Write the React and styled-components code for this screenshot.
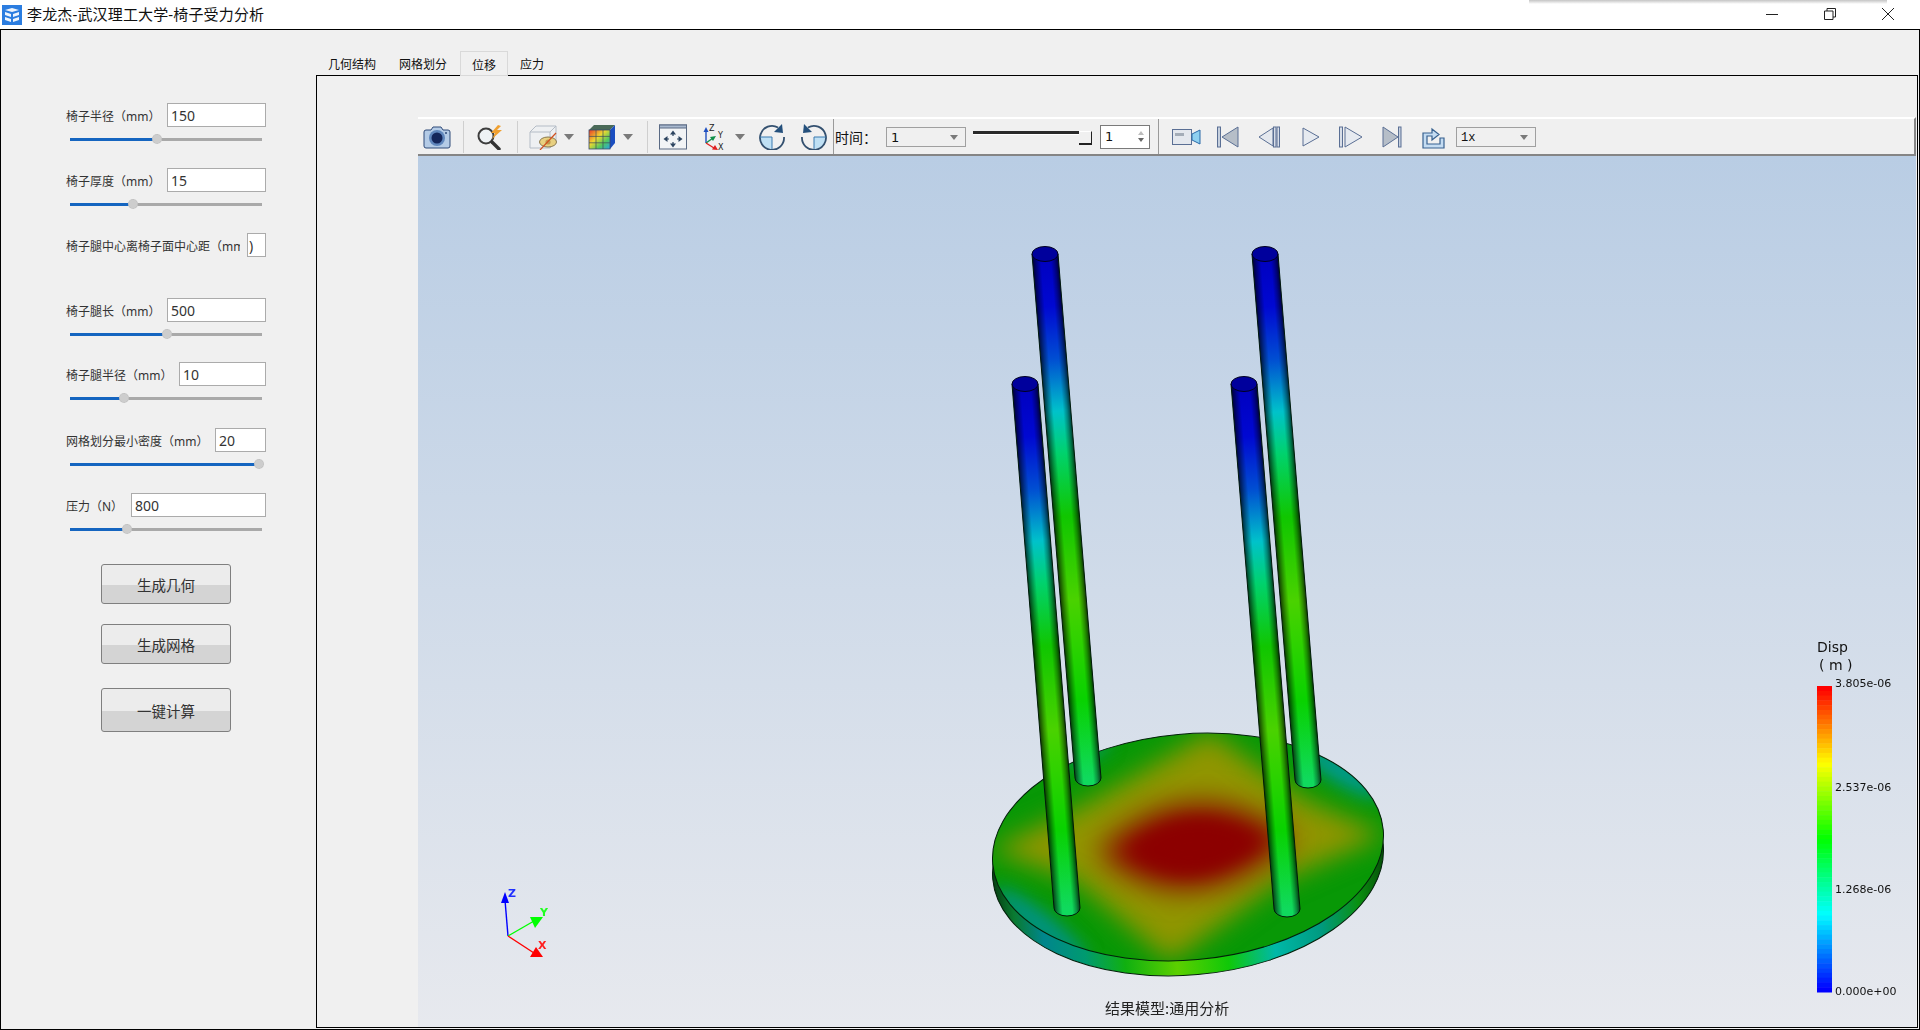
import React from "react";
import styled, { createGlobalStyle } from "styled-components";

const GlobalStyle = createGlobalStyle`
  html, body {
    margin: 0;
    padding: 0;
    background: #fff;
    font-family: "Noto Sans", "Noto Sans CJK SC", sans-serif;
  }
  * {
    box-sizing: border-box;
  }
`;

const Page = styled.div`
  width: 1920px;
  height: 1030px;
  display: flex;
  flex-direction: column;
  overflow: hidden;
`;

const TitleBar = styled.div`
  position: relative;
  height: 29px;
  flex: none;
  display: flex;
  align-items: center;
  padding-left: 2px;
  background: #fff;
`;

const TitleText = styled.span`
  margin: -3px 0 0 5px;
  font-size: 15px;
  letter-spacing: 0.15px;
  color: #111;
`;

const WindowControls = styled.div`
  margin-left: auto;
  padding: 0 26px 2px 0;
  display: flex;
  align-items: center;
  gap: 46px;
  height: 100%;
  svg {
    display: block;
  }
`;

const ForeignShadow = styled.div`
  position: absolute;
  left: 1529px;
  top: 0;
  width: 358px;
  height: 4px;
  background: linear-gradient(#c4c4c4, #ffffff);
`;

const Window = styled.div`
  flex: 1;
  display: flex;
  min-height: 0;
  border: 1px solid #000;
  background: #f0f0f0;
`;

const SidePanel = styled.div`
  width: 315px;
  flex: none;
  padding: 73px 0 0 65px;
  display: flex;
  flex-direction: column;
`;

const FieldGroup = styled.div`
  width: 200px;
  margin-top: ${(p) => p.$mt || 0}px;
`;

const FieldRow = styled.div`
  display: flex;
  align-items: center;
  height: 24px;
`;

const FieldLabel = styled.label`
  flex: 1;
  min-width: 0;
  overflow: hidden;
  white-space: nowrap;
  padding-top: 1px;
  font-size: 12px;
  color: #333;
  margin-right: ${(p) => (p.$clip ? 7 : 0)}px;
`;

const FieldInput = styled.input`
  flex: none;
  width: ${(p) => p.$w}px;
  height: 24px;
  padding: 0 0 0 ${(p) => (p.$tight ? 1 : 3)}px;
  border: 1px solid #ababab;
  background: #fff;
  font: 14px "Noto Sans", sans-serif;
  color: #333;
  outline: none;
`;

const SliderTrack = styled.div`
  position: relative;
  width: 192px;
  height: 3px;
  margin: 11px 0 0 4px;
  background: #a9a9a9;
`;

const SliderFill = styled.div`
  height: 100%;
  width: ${(p) => p.$pct}%;
  background: #1565c0;
`;

const SliderThumb = styled.div`
  position: absolute;
  top: -4px;
  left: ${(p) => p.$pct}%;
  width: 10px;
  height: 10px;
  margin-left: -5px;
  border-radius: 50%;
  background: #cdcdcd;
  border: 1px dotted #bdbdbd;
`;

const ActionButton = styled.button`
  width: 130px;
  height: ${(p) => p.$h}px;
  margin: ${(p) => p.$mt}px 0 0 35px;
  flex: none;
  padding: 0;
  border: 1px solid #7f7f7f;
  border-radius: 3px;
  background: linear-gradient(#ececec 0, #ececec 52%, #d4d4d4 52%, #d4d4d4 100%);
  font: 14.5px "Noto Sans CJK SC", sans-serif;
  color: #333;
`;

const MainArea = styled.div`
  flex: 1;
  min-width: 0;
  padding: 21px 1px 1px 0;
  display: flex;
  flex-direction: column;
`;

const TabBar = styled.div`
  display: flex;
  align-items: flex-end;
  height: 24px;
  flex: none;
`;

const Tab = styled.div`
  position: relative;
  z-index: 1;
  height: ${(p) => (p.$active ? 25 : 24)}px;
  margin-bottom: ${(p) => (p.$active ? -1 : 0)}px;
  margin-left: ${(p) => (p.$active ? 2 : 0)}px;
  padding: 2px 11px 0 ${(p) => (p.$active ? 11 : 12)}px;
  display: flex;
  align-items: center;
  font-size: 12px;
  color: #111;
  background: #f0f0f0;
  border: ${(p) => (p.$active ? "1px solid #d9d9d9" : "none")};
`;

const TabPane = styled.div`
  flex: 1;
  min-height: 0;
  border: 1px solid #000;
  padding: 41px 1px 0 101px;
  display: flex;
  flex-direction: column;
`;

const Toolbar = styled.div`
  height: 39px;
  flex: none;
  padding-left: 5px;
  display: flex;
  align-items: center;
  background: #f0f0f0;
  border-top: 2px solid #fff;
  border-bottom: 2px solid #858585;
  border-right: 2px solid #858585;
`;

const Slot = styled.div`
  flex: none;
  width: ${(p) => p.$w || 28}px;
  height: 28px;
  margin-left: ${(p) => p.$ml || 0}px;
  display: flex;
  align-items: center;
  svg {
    display: block;
  }
`;

const Separator = styled.div`
  flex: none;
  width: 1px;
  height: 32px;
  margin-left: ${(p) => p.$ml}px;
  background: #cfcfcf;
`;

const GroupDivider = styled.div`
  flex: none;
  width: 1px;
  height: 100%;
  margin-left: ${(p) => p.$ml}px;
  background: #9a9a9a;
`;

const DropArrow = styled.div`
  flex: none;
  width: 0;
  height: 0;
  margin-left: ${(p) => p.$ml}px;
  border-left: 5px solid transparent;
  border-right: 5px solid transparent;
  border-top: 6px solid #7a7a7a;
`;

const TimeLabel = styled.span`
  flex: none;
  width: 36px;
  margin-left: 1px;
  font-size: 14px;
  color: #111;
  white-space: nowrap;
`;

const Combo = styled.div`
  flex: none;
  width: 80px;
  height: 20px;
  margin-left: ${(p) => p.$ml}px;
  padding: ${(p) => (p.$mono ? 2 : 1)}px 7px 0 4px;
  display: flex;
  align-items: center;
  justify-content: space-between;
  border: 1px solid #a0a0a0;
  font: ${(p) => (p.$mono ? '12px "Liberation Mono", monospace' : '13px "DejaVu Sans", sans-serif')};
  color: #111;
`;

const ComboArrow = styled.span`
  width: 0;
  height: 0;
  border-left: 4px solid transparent;
  border-right: 4px solid transparent;
  border-top: 5px solid #7a7a7a;
`;

const TimeSlider = styled.div`
  position: relative;
  flex: none;
  width: 119px;
  height: 26px;
  margin-left: 7px;
  &::before {
    content: "";
    position: absolute;
    left: 0;
    right: 0;
    top: 7px;
    height: 3px;
    background: #2a2a2a;
    border-bottom: 1px solid #fff;
  }
`;

const TimeHandle = styled.div`
  position: absolute;
  right: 0;
  top: 7px;
  width: 13px;
  height: 14px;
  background: #f0f0f0;
  border-right: 1px solid #222;
  border-bottom: 2px solid #222;
  border-top: 1px solid #fff;
`;

const Spin = styled.div`
  flex: none;
  width: 50px;
  height: 24px;
  margin-left: 8px;
  padding: 0 5px 0 4px;
  display: flex;
  align-items: center;
  justify-content: space-between;
  border: 1px solid #7a7a7a;
  background: #fff;
  font: 13px "DejaVu Sans", sans-serif;
  color: #111;
`;

const SpinArrows = styled.div`
  display: flex;
  flex-direction: column;
  gap: 3px;
`;

const SpinArrow = styled.span`
  display: block;
  width: 0;
  height: 0;
  border-left: 3px solid transparent;
  border-right: 3px solid transparent;
  ${(p) =>
    p.$down
      ? "border-top: 4px solid #666;"
      : "border-bottom: 4px solid #bdbdbd;"}
`;

const Canvas = styled.div`
  flex: 1;
  min-height: 0;
  background: linear-gradient(#b9cde4, #e7e9ee);
`;

const SceneSvg = styled.svg`
  display: block;
  width: 100%;
  height: 100%;
`;

const fields = [
  { label: "椅子半径（mm）", value: "150", w: 99, pct: 45.3, mt: 0 },
  { label: "椅子厚度（mm）", value: "15", w: 99, pct: 32.8, mt: 27 },
  { label: "椅子腿中心离椅子面中心距（mm）", value: ")", w: 19, mt: 27 },
  { label: "椅子腿长（mm）", value: "500", w: 99, pct: 50.5, mt: 41 },
  { label: "椅子腿半径（mm）", value: "10", w: 87, pct: 28.1, mt: 26 },
  { label: "网格划分最小密度（mm）", value: "20", w: 51, pct: 98.4, mt: 28 },
  { label: "压力（N）", value: "800", w: 135, pct: 29.7, mt: 27 },
];

const legStops = [
  [0, "#0000c4"],
  [0.1, "#0008d8"],
  [0.2, "#0050d8"],
  [0.3, "#00c8d0"],
  [0.38, "#00d870"],
  [0.5, "#10cc00"],
  [0.66, "#4cd800"],
  [0.85, "#08d800"],
  [1, "#10e060"],
];

const legs = [
  { id: "a", x1: 1045, y1: 254, x2: 1088, y2: 778 },
  { id: "b", x1: 1265, y1: 254, x2: 1308, y2: 780 },
  { id: "c", x1: 1025, y1: 384, x2: 1067, y2: 908 },
  { id: "d", x1: 1244, y1: 384, x2: 1287, y2: 909 },
];

const LEG_R = 13;

const LegDefs = ({ leg }) => {
  const dx = leg.x2 - leg.x1;
  const dy = leg.y2 - leg.y1;
  const len = Math.hypot(dx, dy);
  const cx = dy / len;
  const cy = -dx / len;
  return (
    <>
      <linearGradient
        id={`leg-${leg.id}`}
        gradientUnits="userSpaceOnUse"
        x1={leg.x1}
        y1={leg.y1}
        x2={leg.x2}
        y2={leg.y2}
      >
        {legStops.map(([o, c]) => (
          <stop key={o} offset={o} stopColor={c} />
        ))}
      </linearGradient>
      <linearGradient
        id={`shade-${leg.id}`}
        gradientUnits="userSpaceOnUse"
        x1={leg.x1 - cx * LEG_R}
        y1={leg.y1 - cy * LEG_R}
        x2={leg.x1 + cx * LEG_R}
        y2={leg.y1 + cy * LEG_R}
      >
        <stop offset="0" stopColor="#000" stopOpacity="0.72" />
        <stop offset="0.16" stopColor="#000" stopOpacity="0.35" />
        <stop offset="0.32" stopColor="#000" stopOpacity="0.03" />
        <stop offset="0.7" stopColor="#000" stopOpacity="0.03" />
        <stop offset="0.86" stopColor="#000" stopOpacity="0.35" />
        <stop offset="1" stopColor="#000" stopOpacity="0.72" />
      </linearGradient>
    </>
  );
};

const Leg = ({ leg }) => {
  const d = `M${leg.x1 - LEG_R} ${leg.y1} L${leg.x2 - LEG_R} ${leg.y2} A${LEG_R} 8 0 0 0 ${leg.x2 + LEG_R} ${leg.y2} L${leg.x1 + LEG_R} ${leg.y1} Z`;
  return (
    <g>
      <path d={d} fill={`url(#leg-${leg.id})`} />
      <path d={d} fill={`url(#shade-${leg.id})`} stroke="#021a0a" strokeWidth="1" />
      <ellipse cx={leg.x1} cy={leg.y1} rx={LEG_R} ry="7.5" fill="#00009c" stroke="#000020" strokeWidth="1" />
    </g>
  );
};

const barBands = Array.from({ length: 64 }, (_, i) => i);

const Scene = () => (
  <SceneSvg viewBox="418 156 1498 871" preserveAspectRatio="none">
    <defs>
      <clipPath id="disk-clip">
        <ellipse cx="1188" cy="847" rx="196" ry="113" transform="rotate(-5 1188 847)" />
      </clipPath>
      <filter id="blur-s" x="-30%" y="-30%" width="160%" height="160%">
        <feGaussianBlur stdDeviation="9" />
      </filter>
      <filter id="blur-m" x="-30%" y="-30%" width="160%" height="160%">
        <feGaussianBlur stdDeviation="13" />
      </filter>
      <filter id="blur-l" x="-40%" y="-40%" width="180%" height="180%">
        <feGaussianBlur stdDeviation="15" />
      </filter>
      <linearGradient id="rim" gradientUnits="userSpaceOnUse" x1="990" y1="0" x2="1386" y2="0">
        <stop offset="0" stopColor="#063a10" />
        <stop offset="0.05" stopColor="#0a7a30" />
        <stop offset="0.12" stopColor="#00868c" />
        <stop offset="0.22" stopColor="#009a70" />
        <stop offset="0.32" stopColor="#10b010" />
        <stop offset="0.45" stopColor="#5ccf00" />
        <stop offset="0.58" stopColor="#10c808" />
        <stop offset="0.7" stopColor="#00b8a8" />
        <stop offset="0.82" stopColor="#009a80" />
        <stop offset="0.92" stopColor="#0a9010" />
        <stop offset="1" stopColor="#064a08" />
      </linearGradient>
      {legs.map((leg) => (
        <LegDefs key={leg.id} leg={leg} />
      ))}
    </defs>

    <ellipse
      cx="1188"
      cy="862"
      rx="196"
      ry="113"
      transform="rotate(-5 1188 862)"
      fill="url(#rim)"
      stroke="#03200a"
      strokeWidth="1"
    />
    <g clipPath="url(#disk-clip)">
      <rect x="980" y="720" width="420" height="260" fill="#089806" />
      <g filter="url(#blur-s)">
        <ellipse cx="1340" cy="770" rx="48" ry="12" transform="rotate(32 1340 770)" fill="#009a96" />
        <ellipse cx="1040" cy="925" rx="58" ry="12" transform="rotate(38 1040 925)" fill="#00928a" />
        <ellipse cx="1085" cy="752" rx="26" ry="8" transform="rotate(-22 1085 752)" fill="#009a70" />
      </g>
      <polygon
        points="990,850 1090,802 1210,732 1300,797 1385,835 1282,880 1170,962 1075,880"
        fill="#909500"
        filter="url(#blur-m)"
      />
      <path d="M1098 852 Q1190 764 1292 838 Q1190 932 1098 852 Z" fill="#8c0000" filter="url(#blur-l)" />
      <path d="M1132 850 Q1190 798 1260 842 Q1190 896 1132 850 Z" fill="#8c0000" filter="url(#blur-s)" />
    </g>
    <ellipse
      cx="1188"
      cy="847"
      rx="196"
      ry="113"
      transform="rotate(-5 1188 847)"
      fill="none"
      stroke="#03200a"
      strokeWidth="1"
    />

    {legs.map((leg) => (
      <Leg key={leg.id} leg={leg} />
    ))}

    <g strokeWidth="1.4" fill="none">
      <line x1="508" y1="936" x2="505" y2="900" stroke="#0000ff" />
      <line x1="508" y1="936" x2="534" y2="921" stroke="#00ff00" />
      <line x1="508" y1="936" x2="534" y2="953" stroke="#ff0000" />
    </g>
    <polygon points="505,892 501,903 509,903" fill="#0000ff" />
    <polygon points="543,917 535,928 530,917" fill="#00ff00" />
    <polygon points="543,957 530,957 536,947" fill="#ff0000" />
    <text x="508" y="897" fontFamily="DejaVu Sans" fontSize="11" fontWeight="700" fill="#2030ff">Z</text>
    <text x="540" y="916" fontFamily="DejaVu Sans" fontSize="11" fontWeight="700" fill="#20ff20">Y</text>
    <text x="538" y="949" fontFamily="DejaVu Sans" fontSize="11" fontWeight="700" fill="#ff2020">X</text>

    <text x="1817" y="652" fontFamily="DejaVu Sans" fontSize="14" fill="#111">Disp</text>
    <text x="1819" y="670" fontFamily="DejaVu Sans" fontSize="14" fill="#111" xmlSpace="preserve">( m )</text>
    {barBands.map((i) => (
      <rect
        key={i}
        x="1817"
        y={686 + (i * 306) / 64}
        width="15"
        height={306 / 64 + 0.5}
        fill={`hsl(${(i / 63) * 240}, 100%, 50%)`}
      />
    ))}
    {[
      ["3.805e-06", 687],
      ["2.537e-06", 791],
      ["1.268e-06", 893],
      ["0.000e+00", 995],
    ].map(([t, y]) => (
      <text key={t} x="1835" y={y} fontFamily="DejaVu Sans" fontSize="11" fill="#111">
        {t}
      </text>
    ))}

    <text x="1105" y="1014" fontFamily="Noto Sans CJK SC" fontSize="15" fill="#222">结果模型:通用分析</text>
  </SceneSvg>
);

const AppIcon = () => (
  <svg width="20" height="20" viewBox="0 0 20 20">
    <rect width="20" height="20" fill="#2b7de0" />
    <path d="M3 5 L10 3 L17 5 L10 7 Z M3 7 L9 9 V12 L3 10 Z M11 9 L17 7 V10 L11 12 Z M3 12 L9 14 V17 L3 15 Z M11 14 L17 12 V15 L11 17 Z" fill="#fff" opacity="0.92" />
  </svg>
);

const CameraIcon = () => (
  <svg width="28" height="24" viewBox="0 0 28 24">
    <path d="M1 7 Q1 5 3 5 H8 L10 2 H18 L20 5 H25 Q27 5 27 7 V21 Q27 23 25 23 H3 Q1 23 1 21 Z" fill="#b4cbe6" stroke="#2f4a78" />
    <circle cx="14" cy="13" r="8" fill="#5f86bc" />
    <circle cx="14" cy="13" r="5.5" fill="#14265a" />
    <circle cx="23" cy="8" r="1" fill="#2f4a78" />
  </svg>
);

const SearchIcon = () => (
  <svg width="28" height="26" viewBox="0 0 28 26">
    <circle cx="10" cy="12" r="7.5" fill="#eef2f5" stroke="#3d3d3d" strokeWidth="2" />
    <path d="M16 18 L23 25" stroke="#333" strokeWidth="3.4" strokeLinecap="round" />
    <path d="M22 1 L15 9 H19 L16 15 L26 6 H21 L25 2 Z" fill="#f0a030" />
  </svg>
);

const CubeIcon = () => (
  <svg width="28" height="26" viewBox="0 0 28 26">
    <path d="M1 8 L7 2 H27 V18 L21 24 H1 Z" fill="#eef0f2" stroke="#b4bcc6" />
    <path d="M1 8 H21 V24 M21 8 L27 2" fill="none" stroke="#b4bcc6" />
    <ellipse cx="19" cy="18" rx="8.5" ry="5" fill="#e8d080" stroke="#8a7a50" />
    <circle cx="19" cy="18" r="2.6" fill="#c09a50" />
    <path d="M11 26 L27 9" stroke="#d05020" strokeWidth="1.2" />
  </svg>
);

const ColorCubeIcon = () => (
  <svg width="28" height="26" viewBox="0 0 28 26">
    <defs>
      <linearGradient id="cube-face" x1="0" y1="0" x2="1" y2="1">
        <stop offset="0" stopColor="#e83a28" />
        <stop offset="0.4" stopColor="#f0d830" />
        <stop offset="0.7" stopColor="#50c860" />
        <stop offset="1" stopColor="#28a0e8" />
      </linearGradient>
    </defs>
    <path d="M6 1 H27 L22 6 H1 Z" fill="#4a6a58" />
    <path d="M22 6 L27 1 V19 L22 25 Z" fill="#1a4ec0" />
    <rect x="1" y="6" width="21" height="19" fill="url(#cube-face)" />
    <path d="M8 6 V25 M15 6 V25 M1 12.4 H22 M1 18.8 H22" stroke="#3a4a5a" strokeWidth="0.7" />
    <rect x="1" y="6" width="21" height="19" fill="none" stroke="#3a4a6a" strokeWidth="0.8" />
  </svg>
);

const FitIcon = () => (
  <svg width="28" height="26" viewBox="0 0 28 26">
    <rect x="0.5" y="1" width="27" height="24" fill="#f2f4f6" stroke="#5a6a84" />
    <rect x="0.5" y="1" width="27" height="3" fill="#a9b9cf" stroke="#5a6a84" />
    <g stroke="#2c4460" strokeWidth="1.2">
      <path d="M14 10 V12 M14 18 V20 M8 15 H10 M18 15 H20" />
    </g>
    <g fill="#2c4460">
      <path d="M14 6.5 L17 10.5 H11 Z" />
      <path d="M14 23.5 L17 19.5 H11 Z" />
      <path d="M4.5 15 L8.5 12 V18 Z" />
      <path d="M23.5 15 L19.5 12 V18 Z" />
    </g>
  </svg>
);

const AxesIcon = () => (
  <svg width="28" height="28" viewBox="0 0 28 28">
    <path d="M3 20 V8" stroke="#2050c0" strokeWidth="1.4" />
    <path d="M3 4 L0.5 9 H5.5 Z" fill="#2050c0" />
    <path d="M3 20 L10 15" stroke="#10904a" strokeWidth="1.4" />
    <path d="M13 13 L7 14 L10 18 Z" fill="#10904a" />
    <path d="M3 20 L11 25" stroke="#e02020" strokeWidth="1.4" />
    <path d="M15 27 L9 26.5 L12 22 Z" fill="#e02020" />
    <text x="6" y="8" fontFamily="DejaVu Sans" fontSize="8" fill="#222">Z</text>
    <text x="15" y="15" fontFamily="DejaVu Sans" fontSize="8" fill="#222">Y</text>
    <text x="15" y="27" fontFamily="DejaVu Sans" fontSize="8" fill="#222">X</text>
  </svg>
);

const RotateIcon = ({ flip }) => (
  <svg width="28" height="26" viewBox="0 0 28 26">
    <g transform={flip ? "translate(28 0) scale(-1 1)" : undefined}>
      <path d="M14 13 V25 A12 12 0 0 1 2 13 Z" fill="#bfe0f4" />
      <path d="M20 3.5 A12 12 0 1 0 26 13" fill="none" stroke="#33506f" strokeWidth="1.8" />
      <path d="M2 13 H14 V25" fill="none" stroke="#3a7ab0" strokeWidth="1" />
      <path d="M24 0 L25 9 L16 8 Z" fill="#24507c" />
    </g>
  </svg>
);

const VideoIcon = () => (
  <svg width="29" height="20" viewBox="0 0 29 20">
    <rect x="0.5" y="2.5" width="19" height="15" fill="#e4e8ee" stroke="#5a6f94" />
    <rect x="3" y="6" width="9" height="3" fill="#a4adb8" />
    <path d="M20 7 L28 3 V17 L20 13 Z" fill="#8ed0f0" stroke="#2a6aa8" />
  </svg>
);

const FirstIcon = () => (
  <svg width="22" height="22" viewBox="0 0 22 22">
    <rect x="0.5" y="1" width="3" height="20" fill="#c6d0de" stroke="#5a6f94" />
    <path d="M5 11 L21 1 V21 Z" fill="#b6bec8" stroke="#5a6f94" />
  </svg>
);

const PrevIcon = () => (
  <svg width="22" height="22" viewBox="0 0 22 22">
    <path d="M1 11 L15 2 V20 Z" fill="#e4e8ee" stroke="#5a6f94" />
    <rect x="15.5" y="1" width="2.5" height="20" fill="#d8dee8" stroke="#5a6f94" />
    <rect x="19" y="1" width="2.5" height="20" fill="#d8dee8" stroke="#5a6f94" />
  </svg>
);

const PlayIcon = () => (
  <svg width="18" height="22" viewBox="0 0 18 22">
    <path d="M1 2 L17 11 L1 20 Z" fill="#e6eaf0" stroke="#5a6f94" />
  </svg>
);

const StepIcon = () => (
  <svg width="24" height="22" viewBox="0 0 24 22">
    <rect x="0.5" y="1" width="3" height="20" fill="#d8dee8" stroke="#5a6f94" />
    <path d="M6 1 L23 11 L6 21 Z" fill="#e6eaf0" stroke="#5a6f94" />
  </svg>
);

const LastIcon = () => (
  <svg width="20" height="22" viewBox="0 0 20 22">
    <path d="M1 1 L16 11 L1 21 Z" fill="#b6bec8" stroke="#5a6f94" />
    <rect x="16.5" y="1" width="2.5" height="20" fill="#c6d0de" stroke="#5a6f94" />
  </svg>
);

const ExportIcon = () => (
  <svg width="24" height="26" viewBox="0 0 24 26">
    <path d="M2 9 H11 V5 L18 10.5 L11 16 V12 H6 V20 H19 V14 H23 V24 H2 Z" fill="#c4dcf2" stroke="#37618f" strokeWidth="1.2" />
  </svg>
);

const App = () => (
  <Page>
    <GlobalStyle />
    <TitleBar>
      <AppIcon />
      <TitleText>李龙杰-武汉理工大学-椅子受力分析</TitleText>
      <ForeignShadow />
      <WindowControls>
        <svg width="12" height="12" viewBox="0 0 12 12">
          <path d="M0 6.5 H12" stroke="#222" />
        </svg>
        <svg width="12" height="12" viewBox="0 0 12 12">
          <path d="M0.5 3 H9 V11.5 H0.5 Z M3 3 V0.5 H11.5 V9 H9" fill="none" stroke="#222" />
        </svg>
        <svg width="12" height="12" viewBox="0 0 12 12">
          <path d="M0 0 L12 12 M12 0 L0 12" stroke="#222" />
        </svg>
      </WindowControls>
    </TitleBar>

    <Window>
      <SidePanel>
        {fields.map((f) => (
          <FieldGroup key={f.label} $mt={f.mt}>
            <FieldRow>
              <FieldLabel $clip={f.pct === undefined}>{f.label}</FieldLabel>
              <FieldInput $w={f.w} $tight={f.pct === undefined} defaultValue={f.value} readOnly />
            </FieldRow>
            {f.pct !== undefined && (
              <SliderTrack>
                <SliderFill $pct={f.pct} />
                <SliderThumb $pct={f.pct} />
              </SliderTrack>
            )}
          </FieldGroup>
        ))}
        <ActionButton $h={40} $mt={33}>生成几何</ActionButton>
        <ActionButton $h={40} $mt={20}>生成网格</ActionButton>
        <ActionButton $h={44} $mt={24}>一键计算</ActionButton>
      </SidePanel>

      <MainArea>
        <TabBar>
          <Tab>几何结构</Tab>
          <Tab>网格划分</Tab>
          <Tab $active>位移</Tab>
          <Tab>应力</Tab>
        </TabBar>
        <TabPane>
          <Toolbar>
            <Slot><CameraIcon /></Slot>
            <Separator $ml={12} />
            <Slot $ml={12}><SearchIcon /></Slot>
            <Separator $ml={13} />
            <Slot $ml={11}><CubeIcon /></Slot>
            <DropArrow $ml={7} />
            <Slot $ml={14}><ColorCubeIcon /></Slot>
            <DropArrow $ml={7} />
            <Separator $ml={14} />
            <Slot $ml={11}><FitIcon /></Slot>
            <Slot $ml={16}><AxesIcon /></Slot>
            <DropArrow $ml={4} />
            <Slot $ml={13}><RotateIcon /></Slot>
            <Slot $ml={14}><RotateIcon flip /></Slot>
            <GroupDivider $ml={5} />
            <TimeLabel>时间：</TimeLabel>
            <Combo $ml={15}>
              1<ComboArrow />
            </Combo>
            <TimeSlider>
              <TimeHandle />
            </TimeSlider>
            <Spin>
              1
              <SpinArrows>
                <SpinArrow />
                <SpinArrow $down />
              </SpinArrows>
            </Spin>
            <GroupDivider $ml={8} />
            <Slot $ml={13} $w={29}><VideoIcon /></Slot>
            <Slot $ml={16} $w={22}><FirstIcon /></Slot>
            <Slot $ml={19} $w={22}><PrevIcon /></Slot>
            <Slot $ml={22} $w={18}><PlayIcon /></Slot>
            <Slot $ml={19} $w={24}><StepIcon /></Slot>
            <Slot $ml={19} $w={20}><LastIcon /></Slot>
            <Slot $ml={19} $w={24}><ExportIcon /></Slot>
            <Combo $ml={11} $mono>
              1x<ComboArrow />
            </Combo>
          </Toolbar>
          <Canvas>
            <Scene />
          </Canvas>
        </TabPane>
      </MainArea>
    </Window>
  </Page>
);

export default App;
